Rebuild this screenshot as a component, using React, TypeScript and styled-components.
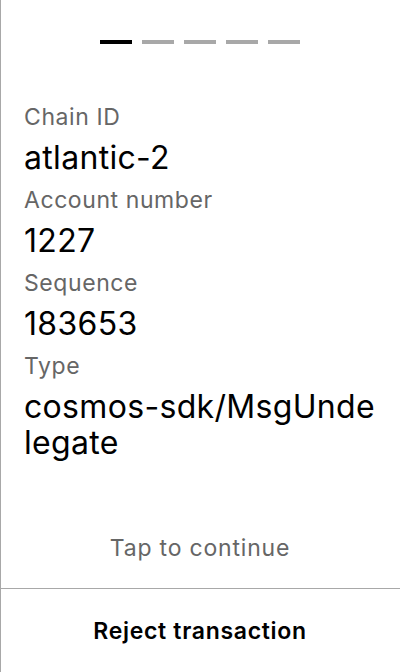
import React from "react";
import styled, { createGlobalStyle } from "styled-components";

const GlobalStyle = createGlobalStyle`
  html, body {
    margin: 0;
    padding: 0;
    background: #ffffff;
  }
  body {
    font-family: Inter, "Noto Sans", "Liberation Sans", sans-serif;
    -webkit-font-smoothing: antialiased;
  }
  * { box-sizing: border-box; }
`;

const Page = styled.div`
  width: 400px;
  height: 672px;
  display: flex;
  flex-direction: column;
  border-left: 1px solid #a8a8a8;
  background: #ffffff;
  overflow: hidden;
`;

const Stepper = styled.div`
  display: flex;
  justify-content: center;
  gap: 10px;
  padding-top: 40px;
  margin-left: -1px;
`;

const Step = styled.div<{ $active?: boolean }>`
  width: 32px;
  height: 4px;
  background: ${(p) => (p.$active ? "#000000" : "#a8a8a8")};
`;

const Fields = styled.div`
  flex: 1;
  display: flex;
  flex-direction: column;
  padding: 58px 23px 0 23px;
`;

const Field = styled.div`
  display: flex;
  flex-direction: column;
  gap: 8px;
  margin-bottom: 9px;
`;

const Label = styled.div`
  font-size: 23px;
  line-height: 30px;
  letter-spacing: 0.025em;
  color: #666666;
`;

const Value = styled.div`
  font-size: 32px;
  line-height: 36px;
  letter-spacing: 0.01em;
  color: #000000;
  word-break: break-all;
`;

const Hint = styled.div`
  text-align: center;
  font-size: 23px;
  line-height: 30px;
  letter-spacing: 0.035em;
  color: #666666;
  margin-bottom: 25px;
  margin-left: -1px;
`;

const Footer = styled.div`
  border-top: 1px solid #a8a8a8;
  height: 84px;
  display: flex;
  align-items: center;
  justify-content: center;
  margin-left: -1px;
`;

const RejectButton = styled.button`
  border: none;
  background: transparent;
  font-family: inherit;
  font-size: 23px;
  font-weight: 600;
  letter-spacing: 0.03em;
  color: #000000;
  cursor: pointer;
  padding: 0;
`;

const fields = [
  { label: "Chain ID", value: "atlantic-2" },
  { label: "Account number", value: "1227" },
  { label: "Sequence", value: "183653" },
  { label: "Type", value: "cosmos-sdk/MsgUndelegate" },
];

export default function App() {
  return (
    <>
      <GlobalStyle />
      <Page>
        <Stepper>
          {[0, 1, 2, 3, 4].map((i) => (
            <Step key={i} $active={i === 0} />
          ))}
        </Stepper>
        <Fields>
          {fields.map((f) => (
            <Field key={f.label}>
              <Label>{f.label}</Label>
              <Value>{f.value}</Value>
            </Field>
          ))}
        </Fields>
        <Hint>Tap to continue</Hint>
        <Footer>
          <RejectButton>Reject transaction</RejectButton>
        </Footer>
      </Page>
    </>
  );
}
